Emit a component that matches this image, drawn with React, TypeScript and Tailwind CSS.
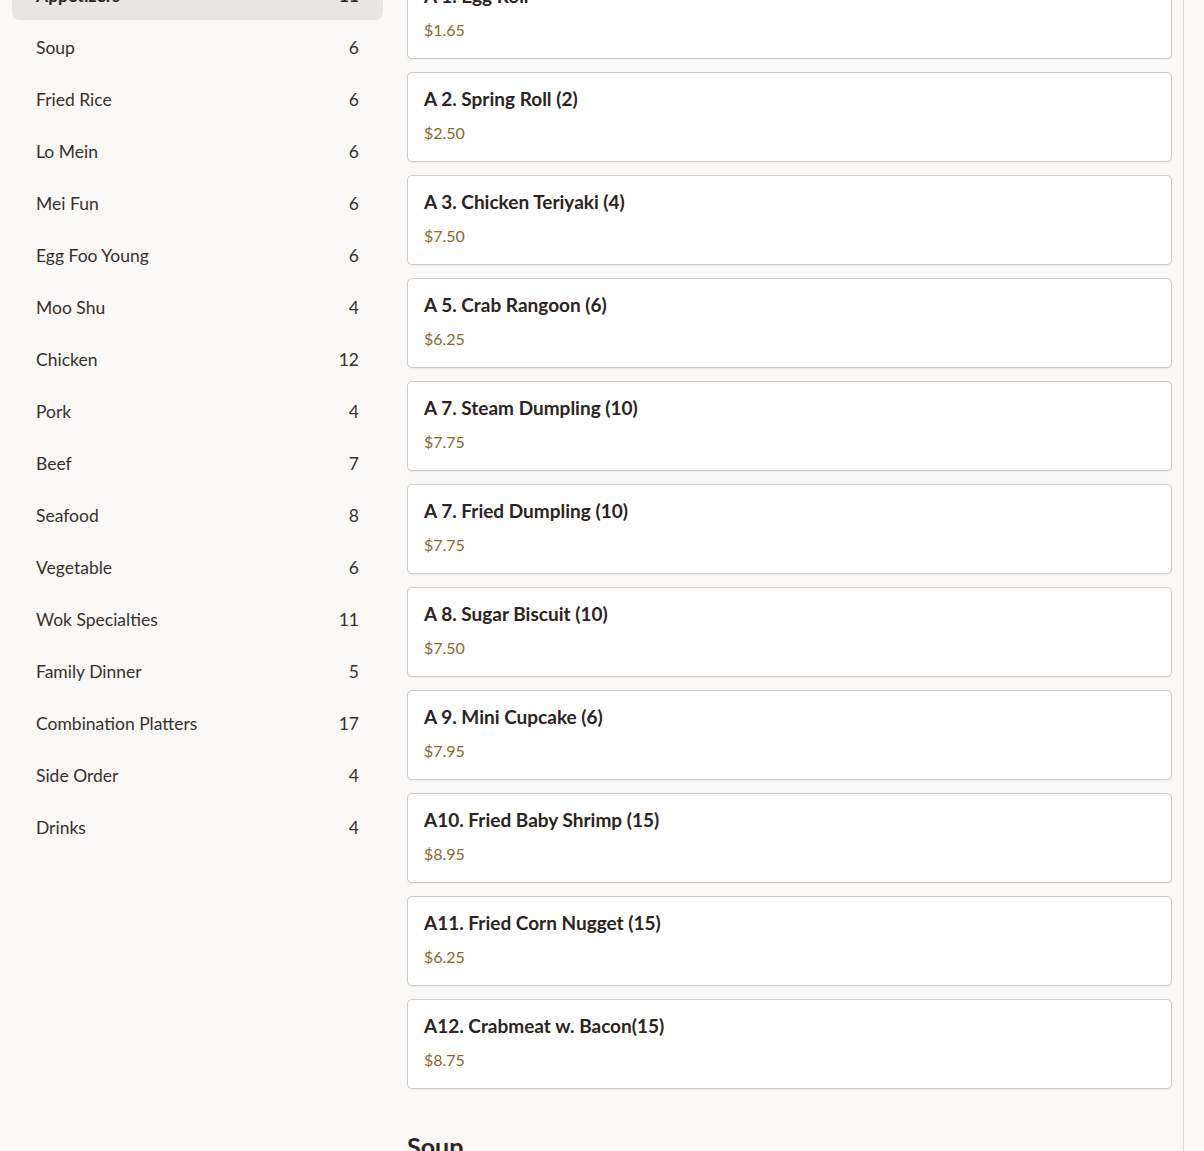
import React from "react";

const categories: [string, number][] = [
  ["Appetizers", 11],
  ["Soup", 6],
  ["Fried Rice", 6],
  ["Lo Mein", 6],
  ["Mei Fun", 6],
  ["Egg Foo Young", 6],
  ["Moo Shu", 4],
  ["Chicken", 12],
  ["Pork", 4],
  ["Beef", 7],
  ["Seafood", 8],
  ["Vegetable", 6],
  ["Wok Specialties", 11],
  ["Family Dinner", 5],
  ["Combination Platters", 17],
  ["Side Order", 4],
  ["Drinks", 4],
];

const appetizers: [string, string][] = [
  ["A 1. Egg Roll", "$1.65"],
  ["A 2. Spring Roll (2)", "$2.50"],
  ["A 3. Chicken Teriyaki (4)", "$7.50"],
  ["A 5. Crab Rangoon (6)", "$6.25"],
  ["A 7. Steam Dumpling (10)", "$7.75"],
  ["A 7. Fried Dumpling (10)", "$7.75"],
  ["A 8. Sugar Biscuit (10)", "$7.50"],
  ["A 9. Mini Cupcake (6)", "$7.95"],
  ["A10. Fried Baby Shrimp (15)", "$8.95"],
  ["A11. Fried Corn Nugget (15)", "$6.25"],
  ["A12. Crabmeat w. Bacon(15)", "$8.75"],
];

export default function App() {
  return (
    <div className="h-[1151px] overflow-hidden bg-[#faf9f7] font-['Lato','Liberation_Sans',sans-serif] text-[#2b2420]">
      <div className="flex h-full">
        <div className="flex flex-1 gap-6 pl-3 pr-[11px] -mt-[31px]">
          <aside className="w-[371px] shrink-0 -mt-px">
            {categories.map(([name, count], i) => (
              <div
                key={name}
                className={
                  i === 0
                    ? "flex h-[52px] items-center justify-between rounded-lg bg-[#e8e6e3] px-6 pt-[5px] text-[17.5px] font-bold"
                    : "flex h-[52px] items-center justify-between px-6 pt-[5px] text-[17.5px] text-[#38302c]"
                }
              >
                <span>{name}</span>
                <span>{count}</span>
              </div>
            ))}
          </aside>
          <main className="flex-1">
            <div className="flex flex-col gap-[13px]">
              {appetizers.map(([title, price]) => (
                <div
                  key={title}
                  className="flex h-[90px] flex-col gap-3 rounded-[5px] border border-[#cfcbc6] bg-white px-4 pt-[14px] shadow-[0_1px_2px_rgba(0,0,0,0.06)]"
                >
                  <div className="text-[19px] font-bold leading-6">{title}</div>
                  <div className="text-[16px] leading-5 text-[#8b6a2b]">{price}</div>
                </div>
              ))}
            </div>
            <h2 className="mt-[39px] text-[25px] font-bold">Soup</h2>
          </main>
        </div>
        <div className="w-[21px] shrink-0 border-l border-[#dedbd7] bg-[#fbfaf9]" />
      </div>
    </div>
  );
}
